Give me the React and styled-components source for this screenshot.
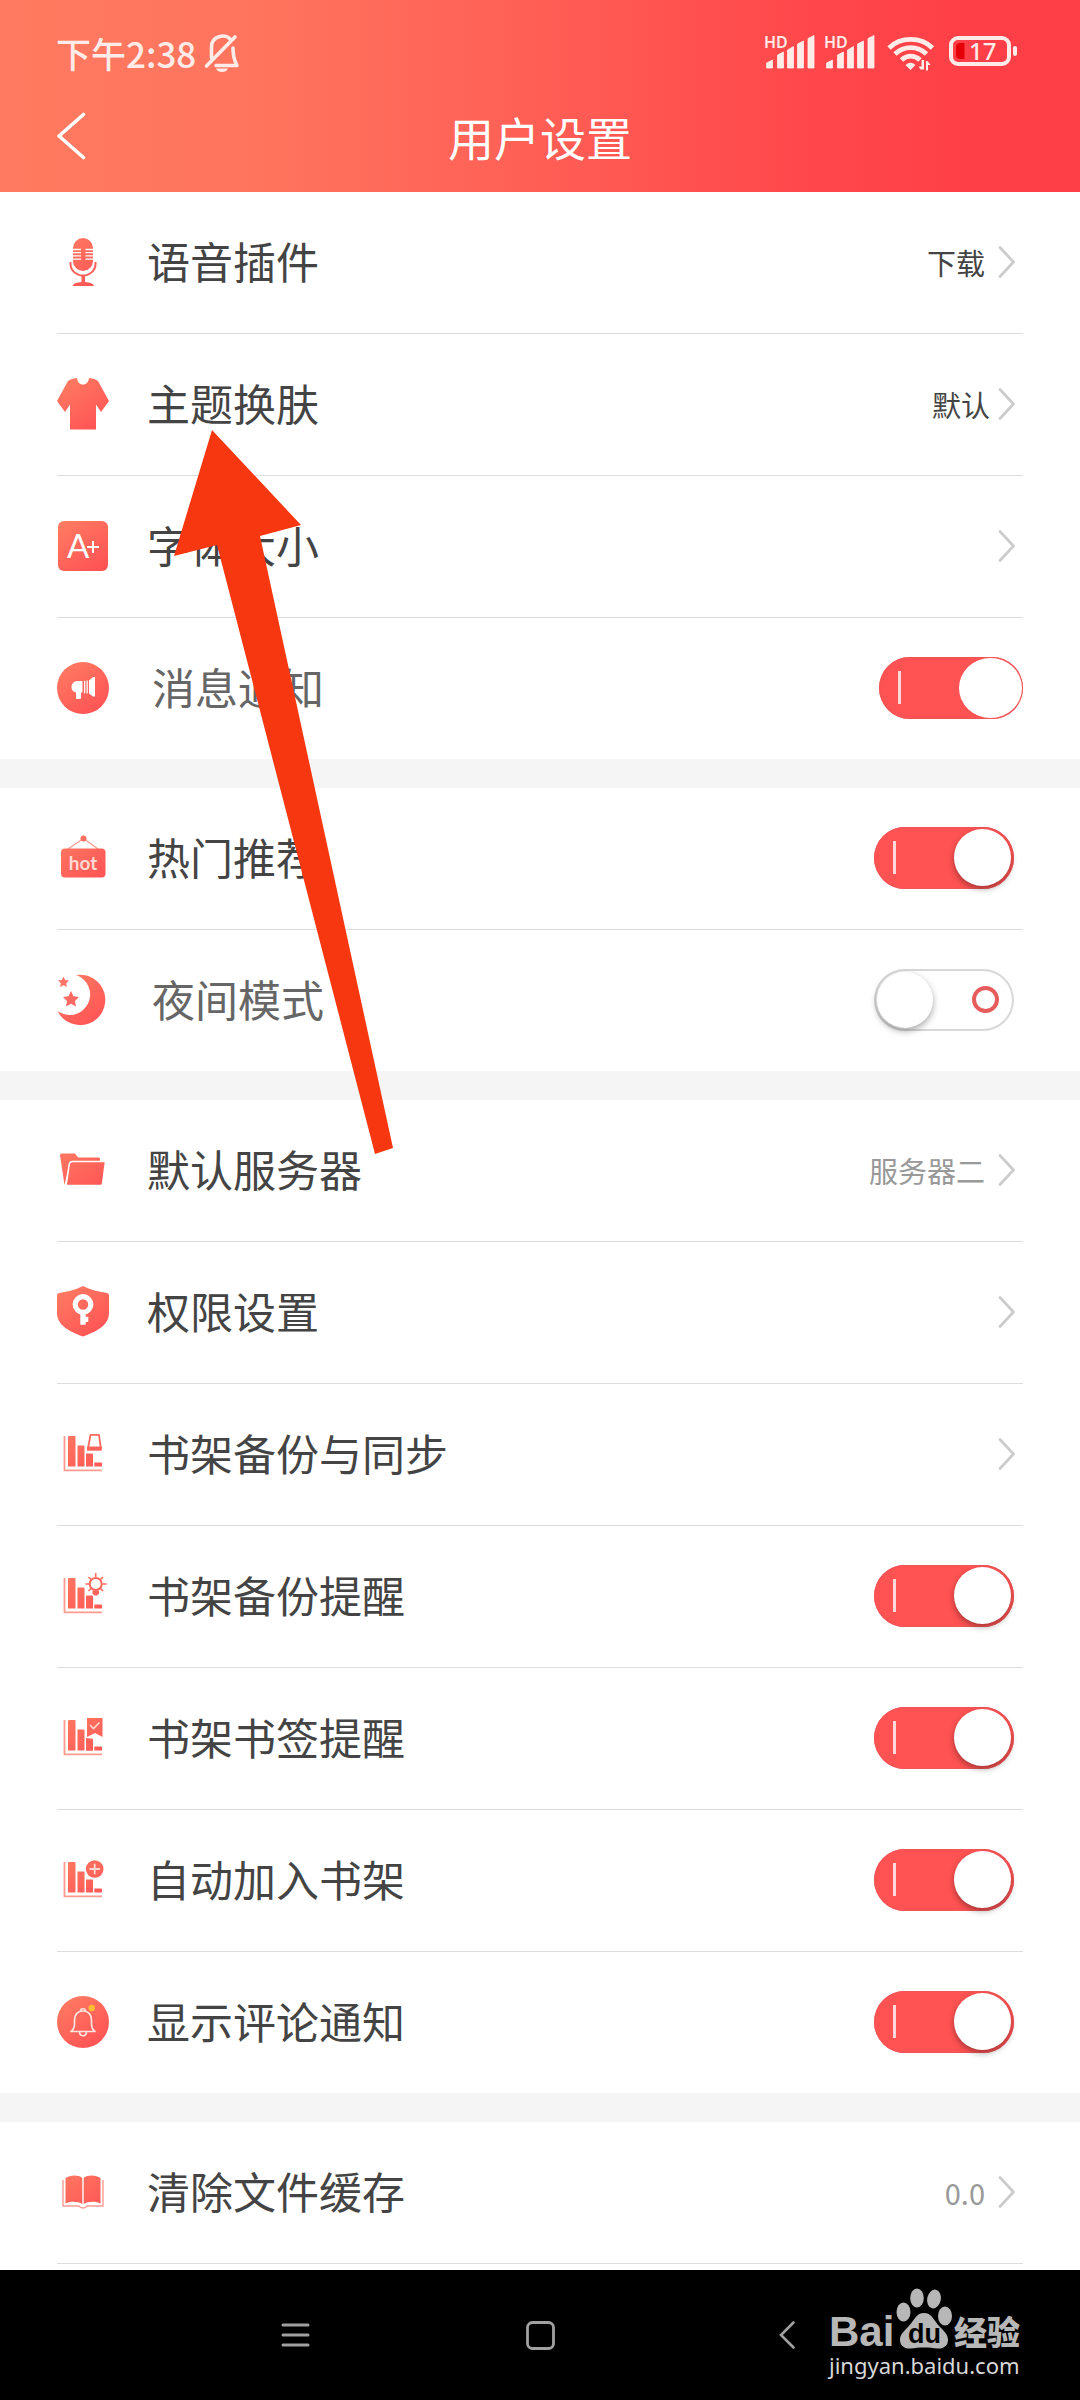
import React, { useState } from "react";
import styled, { createGlobalStyle } from "styled-components";

const GlobalStyle = createGlobalStyle`
  * {
    box-sizing: border-box;
  }

  body {
    margin: 0;
    background: #fff;
    font-family: "Noto Sans CJK SC", "Noto Sans", sans-serif;
  }

  button {
    padding: 0;
    border: 0;
    background: none;
    font: inherit;
    color: inherit;
    cursor: pointer;
  }

  svg {
    display: block;
    flex: none;
    overflow: visible;
  }
`;

const Page = styled.div`
  position: relative;
  display: flex;
  flex-direction: column;
  height: 100vh;
  overflow: hidden;
`;

const Header = styled.header`
  flex: none;
  color: #fff;
  background: linear-gradient(
    90deg,
    #ff7a60 0%,
    #ff745d 24%,
    #ff6056 48%,
    #ff484b 74%,
    #ff3f47 90%
  );
`;

const StatusBar = styled.div`
  display: flex;
  align-items: center;
  justify-content: space-between;
  height: 84px;
  padding: 22px 62px 0 56px;
  color: #ffebe8;
`;

const Clock = styled.div`
  display: flex;
  align-items: center;
  gap: 8px;
  font-size: 35px;
  font-weight: 500;
  line-height: 48px;
`;

const TitleBar = styled.div`
  display: grid;
  grid-template-columns: 1fr auto 1fr;
  align-items: center;
  height: 108px;
  padding: 0 56px 4px;
`;

const BackButton = styled.button`
  justify-self: start;
`;

const Title = styled.h1`
  margin: 0;
  font-size: 46px;
  font-weight: 400;
  line-height: 64px;
`;

const Settings = styled.main`
  display: flex;
  flex-direction: column;
  flex: 1;
  gap: 29px;
  min-height: 0;
  overflow: hidden;
  background: #f5f5f5;
`;

const Group = styled.section`
  flex: none;
  padding: 0 57px;
  background: #fff;

  &:last-child {
    flex: 1 0 auto;
  }
`;

const Row = styled.div`
  display: flex;
  align-items: center;
  height: ${props => (props.$last ? 141 : 142)}px;
  padding-bottom: 2px;
  border-bottom: ${props => (props.$last ? 0 : "1px solid #dcdcdc")};
`;

const Name = styled.label`
  flex: 1;
  padding: 0 0 4px ${props => (props.$muted ? 43 : 38)}px;
  font-size: 43px;
  line-height: 60px;
  color: ${props => (props.$muted ? "#666" : "#444")};
`;

const More = styled.button`
  display: flex;
  align-items: center;
  gap: ${props => (props.$tight ? 9 : 14)}px;
  padding-right: 8px;
  font-size: 29px;
  line-height: 40px;
  color: ${props => (props.$gray ? "#999" : "#444")};
`;

const Switch = styled.input`
  appearance: none;
  display: flex;
  align-items: center;
  justify-content: space-between;
  width: ${props => (props.$wide ? 144 : 140)}px;
  height: 62px;
  margin: 0 ${props => (props.$wide ? 0 : 9)}px 0 0;
  padding: 0 3px;
  border-radius: 31px;
  background: #fff;
  box-shadow: inset 0 0 0 2px #d8d8d8;
  cursor: pointer;

  &::before {
    content: "";
    width: 56px;
    height: 56px;
    border-radius: 50%;
    background: #fff;
    box-shadow: 0 3px 7px rgba(0, 0, 0, 0.35);
  }

  &::after {
    content: "";
    box-sizing: border-box;
    width: 27px;
    height: 27px;
    margin-right: 12px;
    border: 4px solid #e65c5c;
    border-radius: 50%;
  }

  &:checked {
    padding: 0 ${props => (props.$wide ? 1 : 3)}px 0 19px;
    background: #ff5252;
    box-shadow: inset 0 0 0 1px #f05558;
  }

  &:checked::before {
    order: 1;
    width: ${props => (props.$wide ? 63 : 57)}px;
    height: ${props => (props.$wide ? 60 : 57)}px;
    box-shadow: ${props =>
      props.$wide ? "none" : "0 3px 6px rgba(0, 0, 0, 0.35)"};
  }

  &:checked::after {
    width: 3px;
    height: 33px;
    margin: 0;
    border: 0;
    border-radius: 0;
    background: #ffd9d9;
  }
`;

const NavBar = styled.nav`
  display: grid;
  grid-template-columns: repeat(3, 1fr);
  flex: none;
  height: 130px;
  padding: 0 16%;
  background: #000;
`;

const NavButton = styled.button`
  display: flex;
  align-items: center;
  justify-content: center;
`;

/* overlays */

const Pointer = styled.svg`
  position: absolute;
  top: 430px;
  left: 174px;
  pointer-events: none;
`;

const Watermark = styled.div`
  position: absolute;
  right: 59px;
  bottom: 20px;
  color: #d8d8d8;
  font-family: "Noto Sans", sans-serif;
  font-size: 22px;
  line-height: 30px;
`;

const warm = "url(#warm)";

const Gradients = () => (
  <svg width="0" height="0" style={{ position: "absolute" }} aria-hidden="true">
    <defs>
      <linearGradient
        id="warm"
        gradientUnits="userSpaceOnUse"
        x1="8"
        y1="0"
        x2="44"
        y2="52"
      >
        <stop offset="0" stopColor="#ff7b62" />
        <stop offset="1" stopColor="#ff5154" />
      </linearGradient>
    </defs>
  </svg>
);

const Icon = ({ children }) => (
  <svg width="52" height="52" viewBox="0 0 52 52" fill="none" aria-hidden="true">
    {children}
  </svg>
);

const MicIcon = () => (
  <Icon>
    <rect x="16" y="2" width="20" height="33" rx="10" fill={warm} />
    <path
      d="M15 13.5h9M15 16.7h9M15 19.9h9M15 23.1h9M28.5 13.5h9M28.5 16.7h9M28.5 19.9h9M28.5 23.1h9"
      stroke="#fff"
      strokeWidth="1.3"
    />
    <path d="M13.5 26v2a12.500 11.500 0 0 0 25 0v-2" stroke={warm} strokeWidth="2" />
    <path d="M24.5 39.500h3.500V46c5 .4 8.500 1.500 9 4H15.500c.5-2.500 4-3.600 9-4z" fill={warm} />
  </Icon>
);

const ShirtIcon = () => (
  <Icon>
    <path
      d="M20 0C20.5 4 22.5 6.5 26 6.500S31.500 4 32 0C36 .5 39 1.3 41 3L52 23 44 34 39 26.500V51.500H13V26.500L8 34 0 23 11 3C13 1.3 16 .5 20 0z"
      fill={warm}
    />
  </Icon>
);

const FontIcon = () => (
  <Icon>
    <rect x="1" y="1" width="50" height="50" rx="6" fill={warm} />
    <text x="10" y="38" fill="#fff" fontFamily="Lato, sans-serif" fontSize="33">
      A
    </text>
    <path d="M30 27h12M36 21v12" stroke="#fff" strokeWidth="2" />
  </Icon>
);

const SpeakerIcon = () => (
  <Icon>
    <circle cx="26" cy="26" r="26" fill={warm} />
    <path
      d="M20 19h5.500v11.500H24V36q0 1-1 1h-3q-1 0-1-1v-5.500C16 30 14.500 28 14.500 25S17 19 20 19zM27 18.800h1.300v12.400H27zM29.500 18.500h1.300v13h-1.300zM32 18.500l4-3.500h2v19.500h-2l-4-3z"
      fill="#fff"
    />
  </Icon>
);

const HotIcon = () => (
  <Icon>
    <path d="M11 17 26.5 6.5 41 17" stroke="#ff9c92" strokeWidth="1.3" />
    <circle cx="26.5" cy="6.5" r="3" fill={warm} />
    <rect x="4" y="16.5" width="44.5" height="29" rx="4" fill={warm} />
    <text
      x="26"
      y="38"
      fill="#ffd8d4"
      fontFamily="Lato, sans-serif"
      fontSize="19"
      fontWeight="700"
      textAnchor="middle"
    >
      hot
    </text>
  </Icon>
);

const MoonIcon = () => (
  <Icon>
    <path d="M19 1A25.2 25.2 0 1 1 .5 37 20.500 20.500 0 1 0 19 1z" fill={warm} />
    <path
      d="m6.5 2.500 1.700 3.500 3.800.5-2.800 2.700.7 3.800-3.400-1.800L3.100 13l.7-3.800L1 6.500 4.800 6z"
      fill="#ff7468"
    />
    <path
      d="m14 17 2.500 5.200 5.500.7-4 4 1 5.700-5-2.800L9 32.600l1-5.700-4-4 5.500-.7z"
      fill="#ff6a62"
    />
  </Icon>
);

const FolderIcon = () => (
  <Icon>
    <path
      d="M3 11q0-1.500 1.500-1.500H18l3 4h20.500q1.500 0 1.500 1.500v6H12L7.500 41z"
      fill={warm}
    />
    <path
      d="M15.500 17.500h31.500q1.500 0 1.300 1.500l-2.800 21q-.3 1.500-2 1.500H10.500q-1.500 0-1.200-1.500l3-20q.5-2.500 3.200-2.500z"
      fill={warm}
      stroke="#fff"
      strokeWidth="1.5"
    />
  </Icon>
);

const ShieldIcon = () => (
  <Icon>
    <path
      d="M26 0C34 4 43 6 50 7q2 .3 2 2.500V27C52 40 38 46 26 50.500 14 46 0 40 0 27V9.500Q0 7.300 2 7C9 6 18 4 26 0z"
      fill={warm}
    />
    <circle cx="26" cy="18.5" r="7.8" stroke="#fff" strokeWidth="5.2" />
    <path d="M23.3 27h5.400v3.800h2.600V36h-2.600v2.700h-5.400z" fill="#fff" />
  </Icon>
);

const ShelfIcon = ({ children }) => (
  <Icon>
    <path d="M7.5 8v34.300H45" stroke="#ff9a90" strokeWidth="1.8" />
    <path
      d="M12.500 8h5q1 0 1 1v29.500H11V9q0-1 1.500-1zM20.500 17.500h6q1 0 1 1v20h-7zM29 25.500h6q1 0 1 1v12h-7zM37.300 34.500H44q1 0 1 1v3h-7.700z"
      fill={warm}
    />
    {children}
  </Icon>
);

const BackupIcon = () => (
  <ShelfIcon>
    <path d="M29 24V16l2-11h14v19z" fill="#fff" />
    <path
      d="M33.5 6.800h8.500l1.800 13.700H31z"
      stroke={warm}
      strokeWidth="1.8"
      strokeLinejoin="round"
    />
    <path d="M30 18.500h14.700v4.200H30z" fill={warm} />
  </ShelfIcon>
);

const RemindIcon = () => (
  <ShelfIcon>
    <circle cx="38.700" cy="14" r="9" fill="#fff" />
    <circle cx="38.700" cy="14" r="6" stroke={warm} strokeWidth="2" />
    <path
      d="M38.700 3v4M28.500 14h3.500M45.500 14h4M31.500 7l2.500 2.300M46 7l-2.500 2.300M31.500 21l2.500-2.300M46 21l-2.500-2.300"
      stroke={warm}
      strokeWidth="1.6"
    />
    <path d="M35.500 20.500h6.500v3l-2 2h-2.500l-2-2z" fill={warm} />
  </ShelfIcon>
);

const BookmarkIcon = () => (
  <ShelfIcon>
    <path d="M29 5h18v22h-9l-9-1z" fill="#fff" />
    <path d="M29 28h7v10.500h-7zM30 6h15.500v19L38 21l-8 4z" fill={warm} />
    <path d="m33 13 3.500 3.500 6-6" stroke="#ffd8d4" strokeWidth="1.6" />
  </ShelfIcon>
);

const AddIcon = () => (
  <ShelfIcon>
    <circle cx="37.700" cy="15" r="10" fill="#fff" />
    <circle cx="37.700" cy="15" r="8.8" fill={warm} />
    <path d="M32.500 15h10.400M37.700 9.800v10.400" stroke="#ffd8d4" strokeWidth="1.8" />
  </ShelfIcon>
);

const BellIcon = () => (
  <Icon>
    <circle cx="26" cy="26" r="26" fill={warm} />
    <path
      d="M14 35.500c2.500-2 3.500-4 3.500-7.500v-4c0-5 3-9 8.500-9s8.500 4 8.500 9v4c0 3.500 1 5.500 3.500 7.500zM23.500 15c0-3 5-3 5 0M22.500 36c.5 5 6.500 5 7 0"
      stroke="#ffe3df"
      strokeWidth="1.7"
      strokeLinejoin="round"
    />
    <circle cx="34.700" cy="12" r="3.2" fill="#ffbd35" />
  </Icon>
);

const BookIcon = () => (
  <Icon>
    <path d="M6 14v26h16q1 2 4 2t4-2h16V14" stroke="#ff9a92" strokeWidth="1.4" />
    <path
      d="M8.500 12C13 9 21 8.500 25.300 12v26C21 35 13 35 8.500 37.500zM26.700 12C31 8.500 39 9 43.500 12v25.500C39 35 31 35 26.700 38z"
      fill={warm}
    />
  </Icon>
);

const Chevron = () => (
  <svg width="16" height="32" viewBox="0 0 16 32" fill="none" aria-hidden="true">
    <path
      d="M1 1.500 14.500 16 1 30.500"
      stroke="#ccc"
      strokeWidth="2.8"
      strokeLinecap="round"
      strokeLinejoin="round"
    />
  </svg>
);

const MutedBell = () => (
  <svg width="36" height="40" viewBox="0 0 36 40" fill="none" aria-hidden="true">
    <g stroke="currentColor" strokeWidth="3.6" strokeLinecap="round" strokeLinejoin="round">
      <path d="M2.500 33 31 4M7.500 25V14C7.500 3 21 .5 26 6M29 15c0 8 1 12 4 17.500H12" />
    </g>
    <path d="M12 35.500h12q-1.500 3.500-6 3.500t-6-3.500z" fill="currentColor" />
  </svg>
);

const Signal = () => (
  <>
    <text
      x="0"
      y="15"
      fill="currentColor"
      fontFamily="Noto Sans, sans-serif"
      fontSize="16"
      fontWeight="600"
    >
      HD
    </text>
    <path
      d="M2.500 35v-5l6-3v8zM13.500 35V22l6-3v16zM23.500 35V17l6-3.500V35zM33.500 35V11l6-3v27zM44 35V5.500l6-3V35z"
      fill="currentColor"
      stroke="currentColor"
      strokeWidth=".8"
      strokeLinejoin="round"
    />
  </>
);

const StatusIcons = () => (
  <svg width="254" height="40" viewBox="0 0 254 40" fill="none" aria-hidden="true">
    <Signal />
    <g transform="translate(60)">
      <Signal />
    </g>
    <g stroke="currentColor" strokeWidth="4.8">
      <path d="M125 15c11.500-11.500 32-11.500 43.500 0M131 21c9-8.500 22.500-8.500 31.500 0M137.500 27c5.500-5.200 13-5.200 18.500 0" />
    </g>
    <path
      d="M141.500 32q5-4.500 10 0l-5 5zM160 27v9.500h-3.500l-2-3h3V27zM162 37.500V28h1.500l3 4H164v5.500z"
      fill="currentColor"
    />
    <rect x="187" y="5" width="58" height="26" rx="7" stroke="currentColor" strokeWidth="4" />
    <rect x="249" y="13" width="4" height="10" rx="2" fill="currentColor" />
    <path d="M196 10h4.500v16H196q-4 0-4-4v-8q0-4 4-4z" fill="#e50008" />
    <text
      x="205"
      y="27"
      fill="currentColor"
      fontFamily="Noto Sans, sans-serif"
      fontSize="24"
      fontWeight="500"
    >
      17
    </text>
  </svg>
);

const BaiduLogo = () => (
  <svg width="192" height="62" viewBox="0 0 192 62" aria-hidden="true">
    <g fill="#b7b7b7">
      <text x="0" y="58" fontFamily="Liberation Sans, sans-serif" fontSize="42" fontWeight="700">
        Bai
      </text>
      <text x="125" y="57" fontFamily="Noto Sans CJK SC, sans-serif" fontSize="33" fontWeight="900">
        经验
      </text>
      <ellipse cx="74.500" cy="24" rx="7" ry="9.500" />
      <ellipse cx="88" cy="10" rx="6.800" ry="9.500" />
      <ellipse cx="105" cy="11" rx="6.800" ry="9.500" transform="rotate(12 105 11)" />
      <ellipse cx="116" cy="28" rx="7" ry="9.500" />
      <path d="M95 25c8 0 10 8 16 14 5 5 8 8 8 13 0 6-5 9-10 8.500-5-.5-9-1-14-1s-9 .5-14 1c-5 .5-10-2.500-10-8.500 0-5 3-8 8-13 6-6 8-14 16-14z" />
    </g>
    <text x="79" y="55" fill="#000" fontFamily="Liberation Sans, sans-serif" fontSize="27" fontWeight="700">
      du
    </text>
  </svg>
);

const groups = [
  [
    { id: "voice", icon: MicIcon, label: "语音插件", value: "下载" },
    { id: "theme", icon: ShirtIcon, label: "主题换肤", value: "默认", tight: true },
    { id: "font", icon: FontIcon, label: "字体大小" },
    { id: "message", icon: SpeakerIcon, label: "消息通知", on: true, muted: true, wide: true },
  ],
  [
    { id: "hot", icon: HotIcon, label: "热门推荐", on: true },
    { id: "night", icon: MoonIcon, label: "夜间模式", on: false, muted: true },
  ],
  [
    { id: "server", icon: FolderIcon, label: "默认服务器", value: "服务器二", gray: true },
    { id: "permission", icon: ShieldIcon, label: "权限设置" },
    { id: "sync", icon: BackupIcon, label: "书架备份与同步" },
    { id: "backup", icon: RemindIcon, label: "书架备份提醒", on: true },
    { id: "bookmark", icon: BookmarkIcon, label: "书架书签提醒", on: true },
    { id: "autoadd", icon: AddIcon, label: "自动加入书架", on: true },
    { id: "comment", icon: BellIcon, label: "显示评论通知", on: true },
  ],
  [{ id: "cache", icon: BookIcon, label: "清除文件缓存", value: "0.0", gray: true, more: true }],
];

const SettingRow = ({ id, icon: ItemIcon, label, value, on, muted, wide, tight, gray, last }) => {
  const [checked, setChecked] = useState(on);
  const isSwitch = on !== undefined;

  return (
    <Row $last={last}>
      <ItemIcon />
      <Name htmlFor={id} $muted={muted}>
        {label}
      </Name>
      {isSwitch ? (
        <Switch
          id={id}
          type="checkbox"
          role="switch"
          $wide={wide}
          checked={checked}
          onChange={() => setChecked(!checked)}
        />
      ) : (
        <More id={id} type="button" $tight={tight} $gray={gray}>
          {value}
          <Chevron />
        </More>
      )}
    </Row>
  );
};

const App = () => (
  <Page>
    <GlobalStyle />
    <Gradients />
    <Header>
      <StatusBar>
        <Clock>
          下午2:38
          <MutedBell />
        </Clock>
        <StatusIcons />
      </StatusBar>
      <TitleBar>
        <BackButton type="button" aria-label="返回">
          <svg width="30" height="48" viewBox="0 0 30 48" fill="none">
            <path
              d="M27.500 2.500 3 24l24.500 21.500"
              stroke="currentColor"
              strokeWidth="3.6"
              strokeLinecap="round"
              strokeLinejoin="round"
            />
          </svg>
        </BackButton>
        <Title>用户设置</Title>
      </TitleBar>
    </Header>
    <Settings>
      {groups.map((items, i) => (
        <Group key={i}>
          {items.map((item, j) => (
            <SettingRow
              key={item.id}
              {...item}
              last={j === items.length - 1 && !item.more}
            />
          ))}
        </Group>
      ))}
    </Settings>
    <NavBar>
      <NavButton type="button" aria-label="菜单">
        <svg width="28" height="24" viewBox="0 0 28 24">
          <path d="M2 2h25M2 12h25M2 22h25" stroke="#a0a0a0" strokeWidth="3" strokeLinecap="round" />
        </svg>
      </NavButton>
      <NavButton type="button" aria-label="主页">
        <svg width="28" height="28" viewBox="0 0 28 28" fill="none">
          <rect x="1.500" y="1.500" width="26" height="26" rx="5" stroke="#a0a0a0" strokeWidth="2.800" />
        </svg>
      </NavButton>
      <NavButton type="button" aria-label="后退">
        <svg width="16" height="28" viewBox="0 0 16 28" fill="none">
          <path d="M16.500 1.500 4 14l12.500 12.500" stroke="#a0a0a0" strokeWidth="2.600" strokeLinecap="round" />
        </svg>
      </NavButton>
    </NavBar>
    <Watermark>
      <BaiduLogo />
      jingyan.baidu.com
    </Watermark>
    <Pointer width="220" height="724" viewBox="0 0 220 724" aria-hidden="true">
      <path d="M38 0 127 95 86 106 219 718 201 724 43 115 0 126z" fill="#f63710" />
    </Pointer>
  </Page>
);

export default App;
